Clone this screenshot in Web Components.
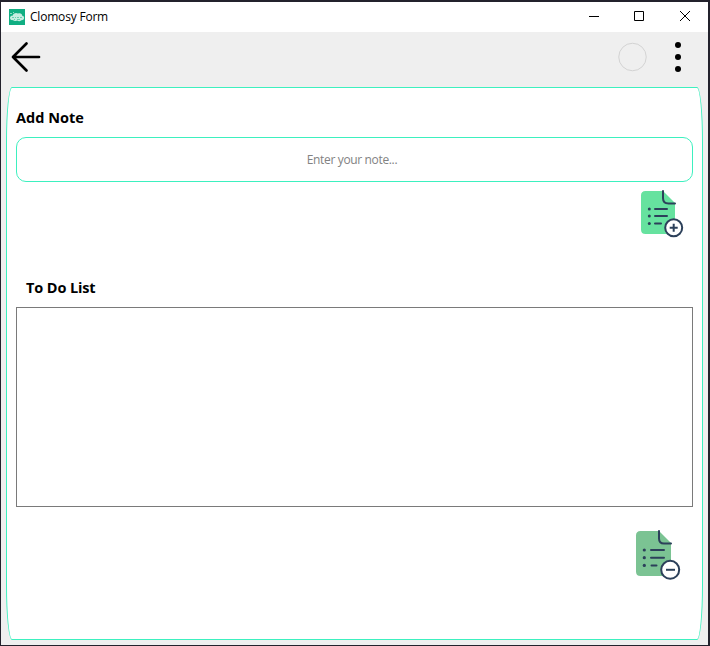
<!DOCTYPE html>
<html lang="en">
<head>
<meta charset="utf-8">
<title>Clomosy Form</title>
<style>
html,body{margin:0;height:100%;overflow:hidden}
body{font-family:"Open Sans","Noto Sans",sans-serif;color:#000}
</style>
</head>
<body>
<app-window>
  <title-bar slot="title">Clomosy Form</title-bar>
  <tool-bar slot="tools"></tool-bar>
  <form-panel>
    <section-title style="--spacing:.02px">Add Note</section-title>
    <note-input>Enter your note...</note-input>
    <note-button kind="add"></note-button>
    <section-title class="second" style="--indent:10px;--spacing:-.12px">To Do List</section-title>
    <todo-list></todo-list>
    <note-button kind="remove"></note-button>
  </form-panel>
</app-window>
<script>
function define(name, html, setup) {
  const template = document.createElement('template');
  template.innerHTML = html;
  customElements.define(name, class extends HTMLElement {
    constructor() {
      super();
      this.attachShadow({mode: 'open'}).append(template.content.cloneNode(true));
    }
    connectedCallback() { if (setup) setup(this); }
  });
}

define('app-window', `<style>
:host{display:flex;flex-direction:column;box-sizing:border-box;width:710px;height:646px;background:#efefef;border:solid #23222c;border-width:2px 2px 1px 1px}
</style><slot name="title"></slot><slot name="tools"></slot><slot></slot>`);

define('title-bar', `<style>
:host{display:flex;align-items:center;box-sizing:border-box;height:30px;padding-left:8px;background:#fff;font-size:12px;line-height:16px}
svg{display:block;flex:none}
.name{margin-left:5px;flex:1;white-space:nowrap;letter-spacing:-.2px}
.controls{display:flex;width:138px;margin-right:-1px}
.controls svg{width:46px;height:30px}
</style>
<svg width="16" height="16" viewBox="0 0 16 16"><path fill="#10ae82" d="M0 0h16v16H0z"/><path fill="#c5ede1" d="M1 8.800C1 7 2.500 6.500 3.600 6.700 4.200 4.300 7 3.300 9 4.600c2-1.200 4.400.2 4.200 2.100 1.400.2 2.100 1.200 1.900 2.300-.1 1.700-1.300 2.300-2.700 2.200-1.400 1.300-3.100 1.200-4.300.2-1.700.9-3.200.7-4.200-.3C2 11.300.9 10.300 1 8.800z"/><path stroke="#55c5a5" stroke-width=".8" d="M3 8.500h2m1 0h1m1 0h2m1 0h2M5 10.500h1m2 0h3"/><path fill="#8bdcc4" d="M1 4h2v1H1zm3-1h1v1H4z"/></svg>
<span class="name"><slot></slot></span>
<div class="controls">
<svg viewBox="0 0 46 30" fill="none" stroke="#000"><path d="M18 14.500h10"/></svg>
<svg viewBox="0 0 46 30" fill="none" stroke="#000"><path d="M17.500 9.500h9v9h-9z"/></svg>
<svg viewBox="0 0 46 30" fill="none" stroke="#000"><path d="M17 9l10 10M27 9L17 19"/></svg>
</div>`);

define('tool-bar', `<style>
:host{display:flex;align-items:center;justify-content:space-between;height:55px;box-sizing:border-box;padding:0 23px 5px 10px}
svg{display:block}.right{display:flex;gap:26px}
</style>
<svg width="32" height="34" viewBox="0 0 32 34" fill="none" stroke="#000" stroke-width="2.700" stroke-linecap="round" stroke-linejoin="round"><path d="M15.500 3.500L2 17l13.500 13.500M2 17h26"/></svg>
<div class="right">
<svg width="30" height="34" viewBox="0 0 30 34"><circle cx="15.500" cy="17" r="13.750" fill="none" stroke="#d3d3d3"/></svg>
<svg width="12" height="34" viewBox="0 0 12 34"><circle cx="5" cy="5" r="3"/><circle cx="5" cy="17" r="3"/><circle cx="5" cy="29" r="3"/></svg>
</div>`);

define('form-panel', `<style>
:host{display:flex;flex-direction:column;box-sizing:border-box;width:697px;height:553px;margin-left:5px;padding:20px 9px 0;background:#fff;border:1px solid #3df0bf;border-radius:6px / 55px}
::slotted(note-input){margin-top:9px}
::slotted(note-button){align-self:flex-end}
::slotted(note-button[kind=add]){margin:8px 7px 0 0}
::slotted(note-button[kind=remove]){margin:23px 12px 0 0}
::slotted(section-title.second){margin-top:38px}
::slotted(todo-list){margin-top:9px}
</style><slot></slot>`);

define('section-title', `<style>
:host{display:block;height:20px;font-size:14.500px;line-height:20px;font-weight:700;padding-left:var(--indent,0);letter-spacing:var(--spacing,0)}
</style><slot></slot>`);

define('note-input', `<style>
:host{display:flex;align-items:center;justify-content:center;box-sizing:border-box;height:45px;width:677px;border:1px solid #3df0bf;border-radius:10px;color:#828282;font-size:12px;line-height:16px;letter-spacing:-.35px;padding-right:5px}
</style><span><slot></slot></span>`);

define('todo-list', `<style>
:host{display:block;box-sizing:border-box;width:677px;height:200px;border:1px solid #7a7a7a}
</style>`);

const noteIcons = {
  add: `<path fill="#66e29f" stroke="none" d="M5.500 1H23l12 12v31H5.500Q1 44 1 39.500v-34Q1 1 5.500 1z"/>
<path d="M23 1v7q0 5.500 5.500 5.500H35" stroke-linecap="round"/>
<path d="M15 19h12M15 26h12M15 33.400h6" stroke-linecap="round"/>
<g fill="#2c405a" stroke="none"><circle cx="9.300" cy="19" r="1.500"/><circle cx="9.300" cy="26" r="1.500"/><circle cx="9.300" cy="33.400" r="1.500"/></g>
<circle cx="33.700" cy="37.700" r="8.500" fill="#fff"/><path d="M29.700 37.700h8M33.700 33.700v8"/>`,
  remove: `<path fill="#7bc393" stroke="none" d="M5.500 1H24l12 12v33H5.500Q1 46 1 41.500v-36Q1 1 5.500 1z"/>
<path d="M24 1v7.500q0 5 5 5H36" stroke-linecap="round"/>
<path d="M16 20h13M16 27.700h13M16.500 35.400h5" stroke-linecap="round"/>
<g fill="#2c405a" stroke="none"><circle cx="9.300" cy="20" r="1.600"/><circle cx="9.300" cy="27.700" r="1.600"/><circle cx="9.300" cy="35.400" r="1.600"/></g>
<circle cx="35.200" cy="39.800" r="9" fill="#fff"/><path d="M31 39.800h9"/>`
};

define('note-button', `<style>
:host{display:block;width:46px;height:50px}svg{display:block;overflow:visible}
</style>
<svg width="46" height="50" viewBox="0 0 46 50" fill="none" stroke="#2c405a" stroke-width="2"></svg>`, el => {
  el.shadowRoot.querySelector('svg').innerHTML = noteIcons[el.getAttribute('kind')];
});
</script>
</body>
</html>
